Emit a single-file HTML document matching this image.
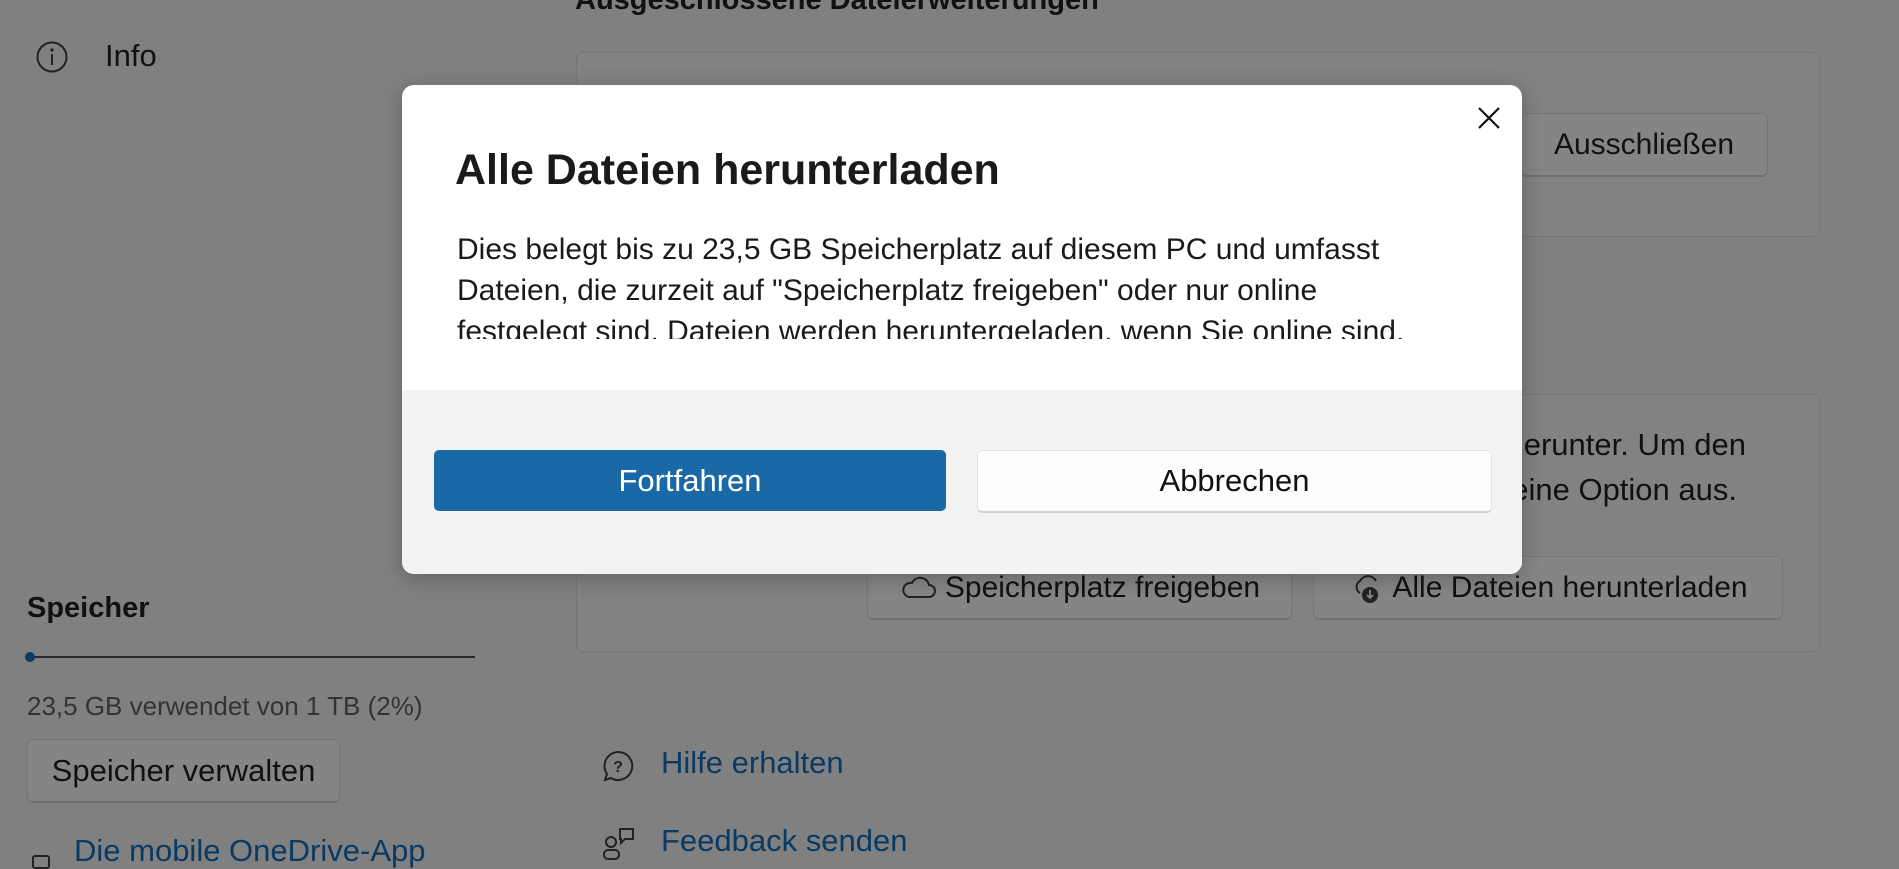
<!DOCTYPE html>
<html><head><meta charset="utf-8"><style>
*{margin:0;padding:0;box-sizing:border-box}
body{width:1899px;height:863px;overflow:hidden;background:#808080;font-family:"Liberation Sans",sans-serif;color:#111;position:relative}
.a{position:absolute;white-space:nowrap}
.card{position:absolute;border:1px solid #767676;border-radius:6px;background:#828282}
.btn{position:absolute;border:1px solid #767676;border-bottom:2px solid #707070;border-radius:6px;background:#858585;font-size:30px;display:flex;align-items:center;justify-content:center}
.link{color:#083a63}
#dlg{position:absolute;left:402px;top:85px;width:1120px;height:489px;background:#fff;border-radius:12px;overflow:hidden;box-shadow:0 4px 20px rgba(0,0,0,.25)}
</style></head><body>
<div class="a" style="left:575px;top:-16px;font-size:29px;font-weight:bold;color:#111">Ausgeschlossene Dateierweiterungen</div>
<svg class="a" style="left:35px;top:40px" width="34" height="34" viewBox="0 0 34 34"><circle cx="17" cy="17" r="14.5" fill="none" stroke="#222" stroke-width="2"/><line x1="17" y1="14" x2="17" y2="25" stroke="#222" stroke-width="2"/><circle cx="17" cy="10" r="1.6" fill="#222"/></svg>
<div class="a" style="left:105px;top:38px;font-size:31px">Info</div>

<div class="card" style="left:576px;top:52px;width:1244px;height:185px"></div>
<div class="btn" style="left:1520px;top:113px;width:248px;height:64px">Ausschließen</div>
<div class="card" style="left:576px;top:394px;width:1244px;height:258px"></div>
<div class="a" style="right:153px;top:427px;font-size:31px">herunter. Um den</div>
<div class="a" style="right:162px;top:472px;font-size:31px">eine Option aus.</div>
<div class="btn" style="left:867px;top:556px;width:425px;height:64px"><svg width="40" height="30" viewBox="0 0 40 30" style="margin-right:6px"><path d="M10 24 H30 a6 6 0 0 0 0-12 a9 9 0 0 0-17-2 a7 7 0 0 0-3 14z" fill="none" stroke="#222" stroke-width="2"/></svg>Speicherplatz freigeben</div>
<div class="btn" style="left:1313px;top:556px;width:470px;height:64px"><svg width="40" height="34" viewBox="0 0 40 34" style="margin-right:4px"><path d="M12 22 a7 7 0 0 1 0-12 a9 9 0 0 1 16 0" fill="none" stroke="#222" stroke-width="2"/><circle cx="22" cy="24" r="8" fill="#222"/><path d="M22 19v8M19 24l3 3 3-3" stroke="#888" stroke-width="1.8" fill="none"/></svg>Alle Dateien herunterladen</div>

<div class="a" style="left:27px;top:592px;font-size:29px;font-weight:bold">Speicher</div>
<div class="a" style="left:30px;top:656px;width:445px;height:2px;background:#2a2a2a"></div>
<div class="a" style="left:25px;top:652px;width:10px;height:10px;border-radius:50%;background:#0c3a63"></div>
<div class="a" style="left:27px;top:691px;font-size:26px;color:#333">23,5 GB verwendet von 1 TB (2%)</div>
<div class="btn" style="left:27px;top:739px;width:313px;height:64px;font-size:31px">Speicher verwalten</div>
<div class="a" style="left:32px;top:855px;width:18px;height:14px;border:2px solid #222;border-radius:3px"></div>
<div class="a link" style="left:74px;top:833px;font-size:31px">Die mobile OneDrive-App</div>

<svg class="a" style="left:601px;top:749px" width="34" height="34" viewBox="0 0 34 34"><path d="M17 3a14 14 0 1 1-7 26l-6 2 2-6A14 14 0 0 1 17 3z" fill="none" stroke="#222" stroke-width="2"/><text x="17" y="23" font-size="16" text-anchor="middle" font-family="Liberation Sans" font-weight="bold" fill="#222">?</text></svg>
<div class="a link" style="left:661px;top:745px;font-size:31px">Hilfe erhalten</div>
<svg class="a" style="left:601px;top:826px" width="36" height="36" viewBox="0 0 36 36"><circle cx="10" cy="16" r="5" fill="none" stroke="#222" stroke-width="2"/><rect x="3" y="24" width="15" height="9" rx="4" fill="none" stroke="#222" stroke-width="2"/><path d="M19 3h13v10h-8l-4 4v-4h-1z" fill="none" stroke="#222" stroke-width="2"/></svg>
<div class="a link" style="left:661px;top:823px;font-size:31px">Feedback senden</div>

<div id="dlg">
 <svg class="a" style="left:1076px;top:22px" width="22" height="22" viewBox="0 0 22 22"><path d="M1 1L21 21M21 1L1 21" stroke="#111" stroke-width="2.2"/></svg>
 <div class="a" style="left:53px;top:61px;font-size:43px;font-weight:bold;color:#1a1a1a">Alle Dateien herunterladen</div>
 <div class="a" style="left:55px;top:144px;width:1040px;height:196px;overflow:hidden;font-size:30px;line-height:41px;color:#1a1a1a">Dies belegt bis zu 23,5 GB Speicherplatz auf diesem PC und umfasst<br>Dateien, die zurzeit auf "Speicherplatz freigeben" oder nur online<br>festgelegt sind. Dateien werden heruntergeladen, wenn Sie online sind.</div>
 <div style="position:absolute;left:0;top:254px;width:100%;height:110px;background:#fff"></div>
 <div style="position:absolute;left:0;top:305px;width:100%;height:184px;background:#f3f3f3"></div>
 <div class="a" style="left:32px;top:365px;width:512px;height:61px;background:#1a69a6;border-radius:5px;color:#fff;font-size:31px;display:flex;align-items:center;justify-content:center">Fortfahren</div>
 <div class="a" style="left:575px;top:365px;width:515px;height:63px;background:#fdfdfd;border:1px solid #e2e2e2;border-bottom:2px solid #d0d0d0;border-radius:5px;font-size:31px;display:flex;align-items:center;justify-content:center">Abbrechen</div>
</div>
</body></html>
